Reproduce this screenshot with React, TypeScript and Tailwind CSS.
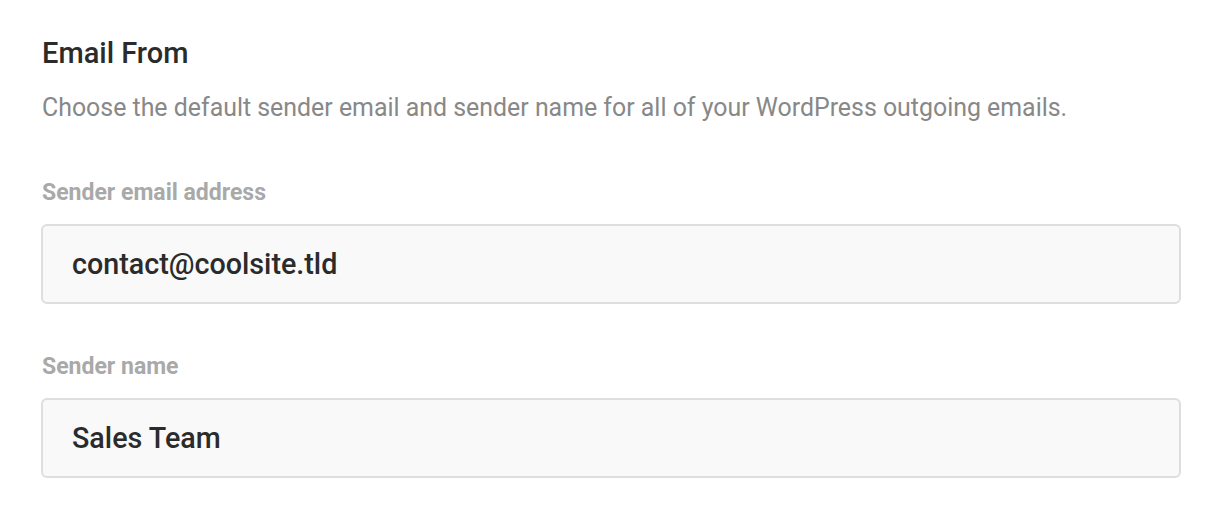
export default function App() {
  return (
    <div className="min-h-screen bg-white px-[41px] pt-[34px] font-['Roboto',sans-serif]">
      <h2 className="ml-px text-[29px] font-medium leading-[38px] text-[#2b2b2b]">Email From</h2>
      <p className="ml-px mt-[19px] text-[24.9px] leading-[34px] text-[#888888]">
        Choose the default sender email and sender name for all of your WordPress outgoing emails.
      </p>

      <div className="mt-[50px] w-[1140px]">
        <Field label="Sender email address" value="contact@coolsite.tld" />
        <div className="mt-[45px]">
          <Field label="Sender name" value="Sales Team" />
        </div>
      </div>
    </div>
  );
}

function Field({ label, value }: { label: string; value: string }) {
  return (
    <div>
      <label className="ml-px block pt-[2px] text-[23px] font-bold leading-[32px] text-[#a9a9a9]">
        {label}
      </label>
      <input
        readOnly
        value={value}
        className="mt-[15px] block h-[80px] w-full rounded-[6px] border-2 border-[#dedede] bg-[#f9f9f9] px-[29px] text-[28.7px] font-medium text-[#2b2b2b] outline-none"
      />
    </div>
  );
}
